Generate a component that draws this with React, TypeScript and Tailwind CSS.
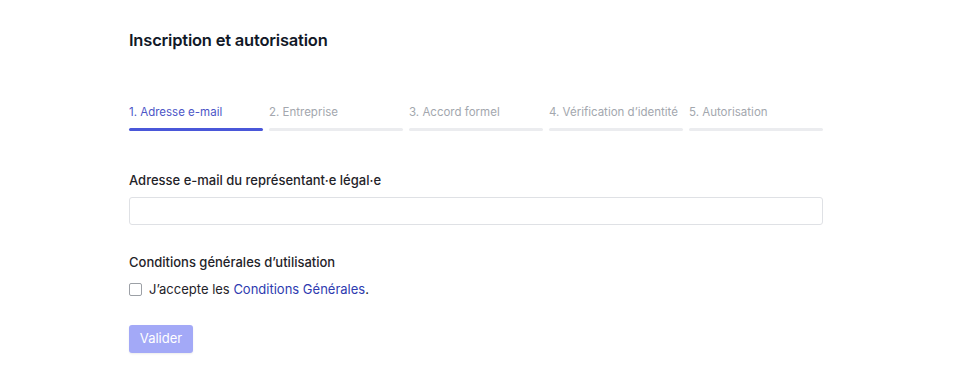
export default function App() {
  const steps = [
    "1. Adresse e-mail",
    "2. Entreprise",
    "3. Accord formel",
    "4. Vérification d’identité",
    "5. Autorisation",
  ];
  return (
    <div className="w-[955px] h-[387px] bg-white overflow-hidden" style={{ fontFamily: "Inter, 'Noto Sans', sans-serif" }}>
      <div className="pl-[129px] w-[823px]">
        <h1 className="pt-[30px] text-[16.5px] leading-[20px] font-semibold text-[#111827] tracking-[-0.2px]">
          Inscription et autorisation
        </h1>
        <div className="mt-[55px] flex gap-[6px]">
          {steps.map((s, i) => (
            <div key={s} className="w-[134px] flex flex-col">
              <span className={`text-[11.5px] leading-[14px] ${i === 0 ? "text-[#4c55c7]" : "text-[#a3a7ae]"}`}>{s}</span>
              <div className={`mt-[9px] h-[3px] rounded-full ${i === 0 ? "bg-[#4a57d9]" : "bg-[#ebecef]"}`} />
            </div>
          ))}
        </div>
        <label className="block mt-[41px] text-[13px] leading-[16px] font-medium text-[#1f2329]">
          Adresse e-mail du représentant·e légal·e
        </label>
        <input className="mt-[9px] block w-full h-[28px] border border-[#dfe1e5] rounded-[3px] bg-white" />
        <div className="mt-[29px] text-[13px] leading-[16px] font-medium text-[#1f2329]">
          Conditions générales d’utilisation
        </div>
        <div className="mt-[11px] flex items-center gap-[7px]">
          <span className="w-[13px] h-[13px] border border-[#9ca0a6] rounded-[2px] bg-white" />
          <span className="text-[13px] leading-[16px] text-[#1f2329]">
            J’accepte les <span className="text-[#2e3bb0]">Conditions Générales</span>.
          </span>
        </div>
        <button className="mt-[28px] w-[64px] h-[28px] rounded-[3px] bg-[#a3a9f7] text-white text-[13px] shadow-[0_1px_2px_rgba(0,0,0,0.08)]">
          Valider
        </button>
      </div>
    </div>
  );
}
